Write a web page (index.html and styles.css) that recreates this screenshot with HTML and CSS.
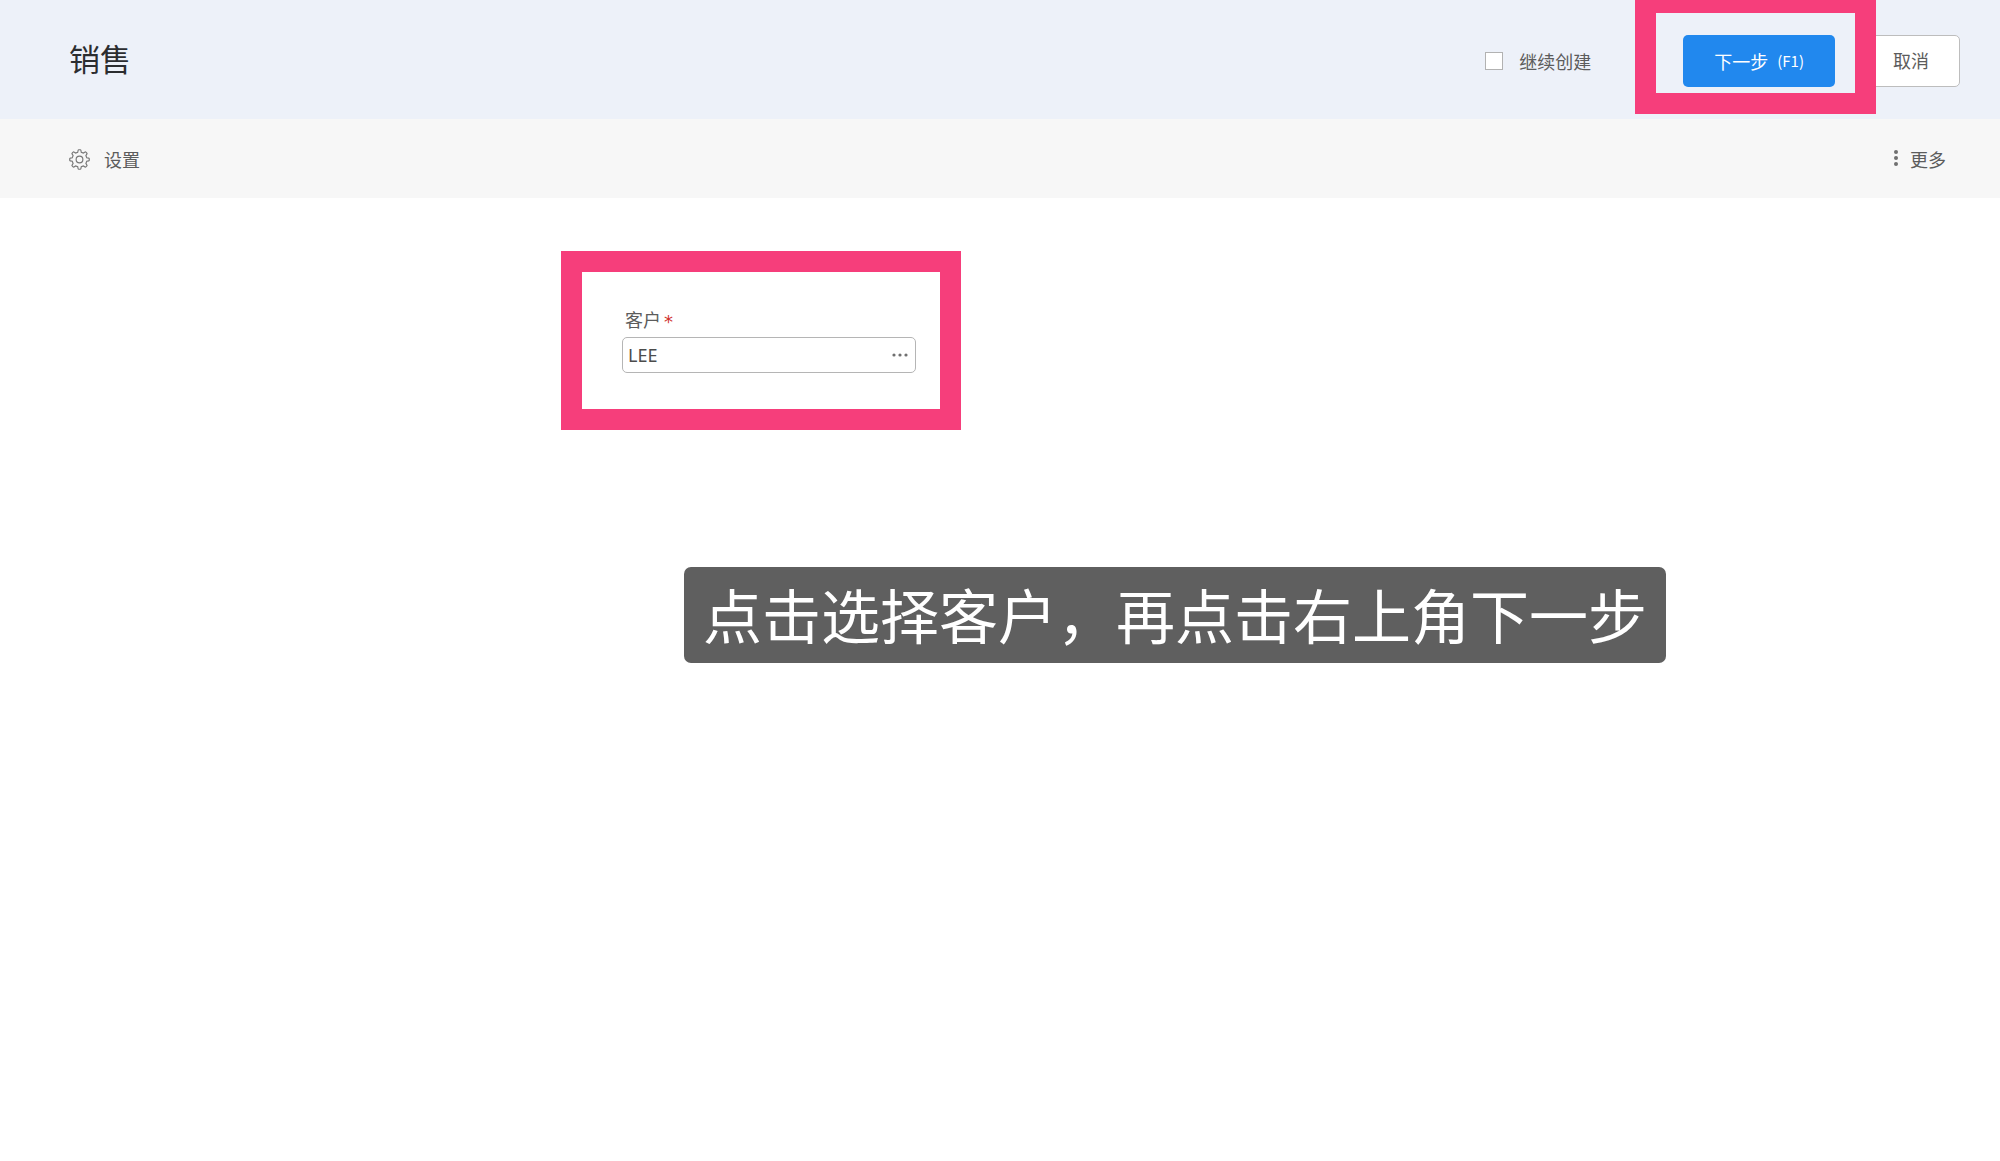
FILE: index.html
```html
<!DOCTYPE html>
<html lang="zh-CN">
<head>
<meta charset="utf-8">
<meta name="viewport" content="width=device-width, initial-scale=1">
<title>销售</title>
<link rel="stylesheet" href="styles.css">
</head>
<body>
<header class="page-header">
  <h1 class="page-title">销售</h1>
  <div class="header-actions">
    <label class="keep-creating"><input class="checkbox" type="checkbox">继续创建</label>
    <div class="next-step">
      <button class="button button-primary" type="submit" form="sale-form">下一步<span class="shortcut">(F1)</span></button>
      <span class="highlight highlight-next"></span>
    </div>
    <button class="button button-cancel" type="button">取消</button>
  </div>
</header>
<nav class="toolbar">
  <button class="tool" type="button">
    <svg class="icon-gear" viewBox="0 0 20 20" aria-hidden="true">
      <path d="M8.3 3.1 L8.7 1.2 Q8.8.7 9.3.7 H10.7 Q11.2.7 11.3 1.2 L11.7 3.1 L13.7 3.9 L15.3 2.9 Q15.7 2.6 16.1 3 L17 3.9 Q17.4 4.3 17.1 4.7 L16.1 6.3 L16.9 8.3 L18.8 8.7 Q19.3 8.8 19.3 9.3 V10.7 Q19.3 11.2 18.8 11.3 L16.9 11.7 L16.1 13.7 L17.1 15.3 Q17.4 15.7 17 16.1 L16.1 17 Q15.7 17.4 15.3 17.1 L13.7 16.1 L11.7 16.9 L11.3 18.8 Q11.2 19.3 10.7 19.3 H9.3 Q8.8 19.3 8.7 18.8 L8.3 16.9 L6.3 16.1 L4.7 17.1 Q4.3 17.4 3.9 17 L3 16.1 Q2.6 15.7 2.9 15.3 L3.9 13.7 L3.1 11.7 L1.2 11.3 Q.7 11.2.7 10.7 V9.3 Q.7 8.8 1.2 8.7 L3.1 8.3 L3.9 6.3 L2.9 4.7 Q2.6 4.3 3 3.9 L3.9 3 Q4.3 2.6 4.7 2.9 L6.3 3.9 Z"/>
      <circle cx="10" cy="10" r="3.2"/>
    </svg>
    <span>设置</span>
  </button>
  <button class="tool tool-more" type="button">
    <svg class="icon-more" viewBox="0 0 4 16" aria-hidden="true"><circle cx="2" cy="2" r="2"/><circle cx="2" cy="8" r="2"/><circle cx="2" cy="14" r="2"/></svg>
    <span>更多</span>
  </button>
</nav>
<main class="content">
  <form class="sale-form" id="sale-form">
    <div class="field">
      <label class="field-label" for="customer">客户<span class="required">*</span></label>
      <div class="picker">
        <input class="picker-input" id="customer" type="text" value="LEE">
        <button class="picker-button" type="button" aria-label="选择客户">
          <svg class="icon-dots" viewBox="0 0 16 4" aria-hidden="true"><circle cx="2" cy="2" r="1.6"/><circle cx="8" cy="2" r="1.6"/><circle cx="14" cy="2" r="1.6"/></svg>
        </button>
      </div>
      <span class="highlight highlight-field"></span>
    </div>
    <p class="caption">点击选择客户，再点击右上角下一步</p>
  </form>
</main>
</body>
</html>
```
FILE: styles.css
```css
* {
  box-sizing: border-box;
}

body {
  margin: 0;
  background: #fff;
  color: #5c5c5c;
  font: 18px/26px "Noto Sans CJK SC", sans-serif;
}

button,
input {
  margin: 0;
  color: inherit;
  font: inherit;
}

.page-header {
  display: flex;
  align-items: center;
  justify-content: space-between;
  padding: 32px 40px 32px 69px;
  background: #edf1f9;
}

.page-title {
  margin: 0;
  padding-bottom: 3px;
  color: #2b2d30;
  font-size: 31px;
  font-weight: 400;
  line-height: 52px;
}

.header-actions {
  display: flex;
  align-items: center;
  padding-top: 3px;
}

.keep-creating {
  display: flex;
  align-items: center;
  gap: 16px;
  margin-right: 92px;
}

.checkbox {
  appearance: none;
  width: 18px;
  height: 18px;
  border: 1px solid #b2b2b2;
  background: #fff;
}

.next-step {
  position: relative;
  margin-right: 27px;
}

.button {
  display: flex;
  align-items: center;
  justify-content: center;
  height: 52px;
  border: 0;
  border-radius: 5px;
  white-space: nowrap;
}

.button-primary {
  gap: 9px;
  padding: 0 31px;
  background: #2188ee;
  color: #fff;
}

.shortcut {
  font-size: 15px;
}

.button-cancel {
  padding: 0 30px 2px;
  border: 1px solid #bdbdbd;
  background: #fff;
}

/* Guide frames drawn over the controls of the current step */
.highlight {
  position: absolute;
  z-index: 1;
  border: 21px solid #f63e7b;
  pointer-events: none;
}

.highlight-next {
  inset: -43px -41px -27px -48px;
}

.highlight-field {
  inset: -55px -45px -57px -61px;
}

.toolbar {
  display: flex;
  align-items: center;
  justify-content: space-between;
  padding: 27px 54px 26px 69px;
  background: #f7f7f7;
}

.tool {
  display: flex;
  align-items: center;
  gap: 14px;
  padding: 0;
  border: 0;
  background: none;
}

.tool-more {
  gap: 12px;
}

.icon-gear {
  width: 21px;
  height: 21px;
  fill: none;
  stroke: #777;
  stroke-width: 1.1;
}

.icon-more {
  width: 4px;
  height: 16px;
  margin-bottom: 3px;
  fill: #707070;
}

.content {
  padding: 108px 24px 24px;
}

.sale-form {
  max-width: 756px;
  margin: 0 auto;
}

.field {
  position: relative;
  width: 294px;
}

.field-label {
  display: flex;
  align-items: center;
  gap: 3px;
  height: 31px;
  padding: 0 3px 6px;
}

.required {
  padding-top: 6px;
  color: #d0312d;
  font-family: "DejaVu Sans", sans-serif;
}

.picker {
  display: flex;
  align-items: center;
  height: 36px;
  border: 1px solid #b5b5b5;
  border-radius: 5px;
  background: #fff;
}

.picker-input {
  flex: 1;
  min-width: 0;
  padding: 0 5px;
  border: 0;
  outline: 0;
  background: none;
  color: #4c4c4c;
  font-family: "Noto Sans", sans-serif;
}

.picker-button {
  display: flex;
  padding: 7px;
  border: 0;
  background: none;
}

.icon-dots {
  width: 16px;
  height: 4px;
  fill: #707070;
}

.caption {
  width: max-content;
  margin: 194px 0 0 62px;
  padding: 0 19px 2px;
  border-radius: 7px;
  background: #5f5f5f;
  color: #fff;
  font-size: 59px;
  line-height: 94px;
}
```
